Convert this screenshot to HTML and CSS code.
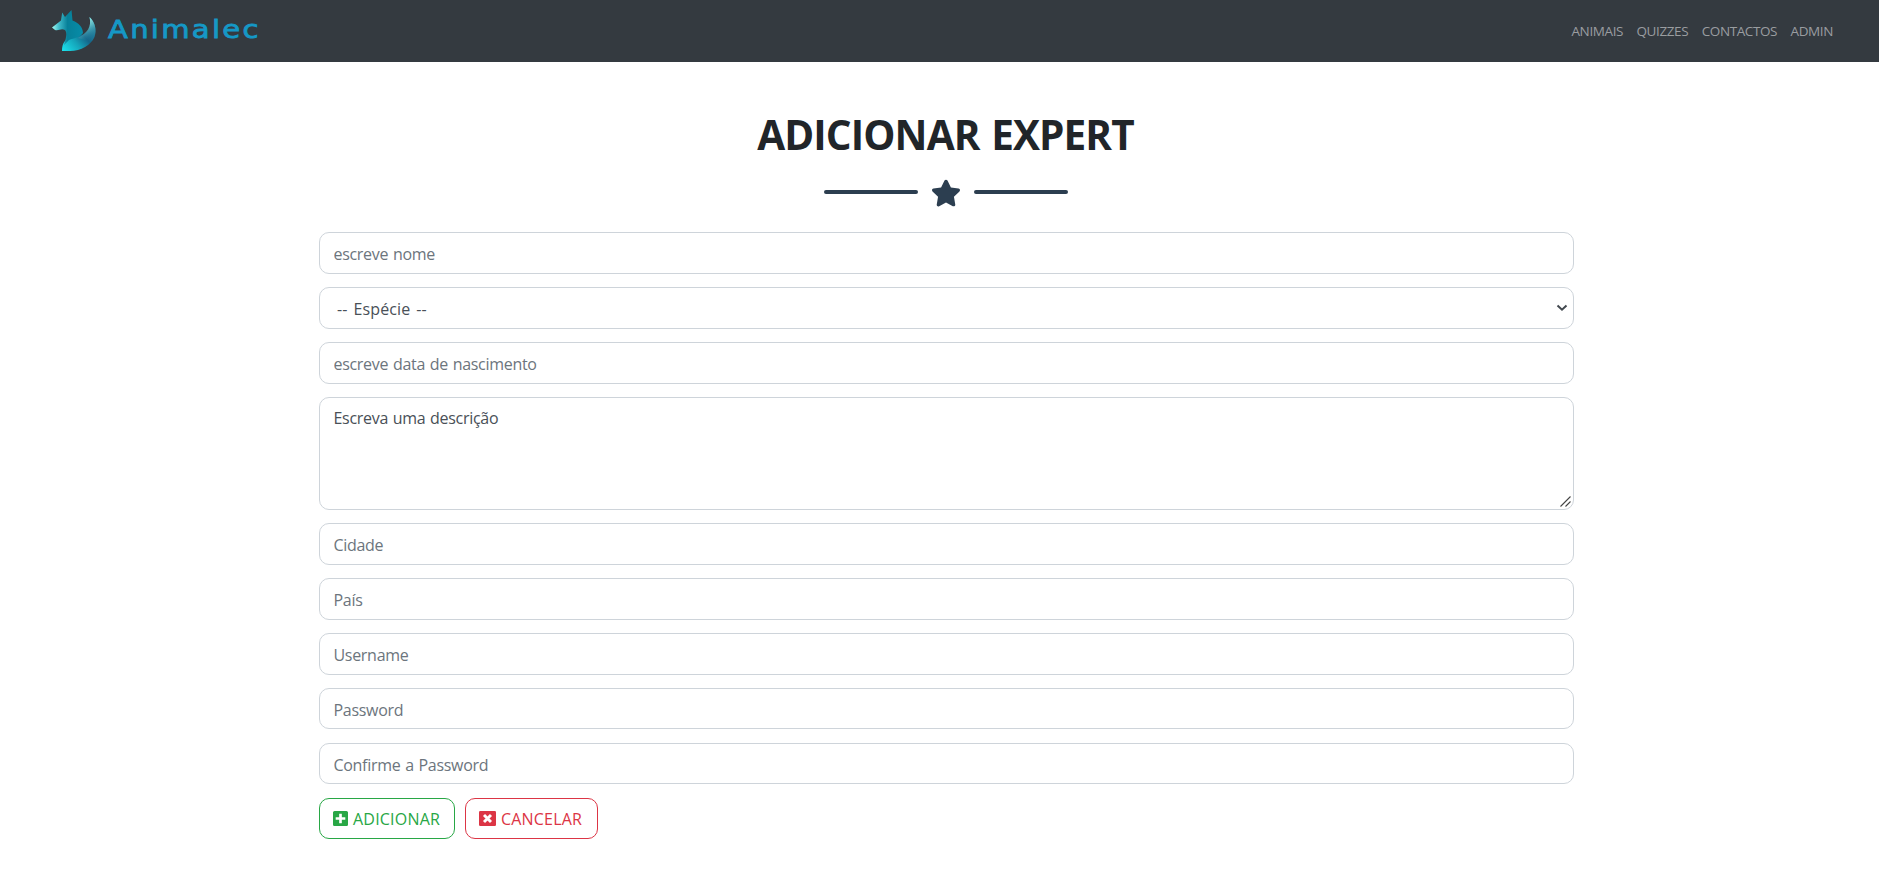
FILE: index.html
```html
<!DOCTYPE html>
<html lang="pt">
<head>
<meta charset="utf-8">
<title>Animalec</title>
<link rel="stylesheet" href="styles.css">
</head>
<body>
<header class="navbar">
  <a class="brand">
    <svg class="brand-logo" viewBox="0 0 46 42" width="46" height="42">
      <defs>
        <linearGradient id="head" x1="0" y1=".5" x2="1" y2=".5"><stop offset="0" stop-color="#a4fbf3"/><stop offset=".22" stop-color="#42bccb"/><stop offset=".5" stop-color="#078099"/><stop offset="1" stop-color="#078ca8"/></linearGradient>
        <linearGradient id="body" x1="0" y1="1" x2=".9" y2=".2"><stop offset="0" stop-color="#1ce4ee"/><stop offset=".4" stop-color="#14a2b8"/><stop offset=".65" stop-color="#14668a"/><stop offset="1" stop-color="#268ba5"/></linearGradient>
        <linearGradient id="tail" x1=".3" y1="0" x2=".7" y2="1"><stop offset="0" stop-color="#b5fff5"/><stop offset=".45" stop-color="#58b5c1"/><stop offset="1" stop-color="#15668a" stop-opacity="0"/></linearGradient>
      </defs>
      <path fill="url(#body)" d="M11 41C11 33 14 29 21 27 31 26 37 23 39 17 40 13 39 10 38.500 7 44 12 46 20 43.500 27 40 35 30 41 19 41Z"/>
      <path fill="url(#tail)" d="M38.500 7C44 12 46 20 43.500 27L37 31 27 28C36 23 41 17 38.500 7Z"/>
      <path fill="url(#head)" d="M1 17.500 10 10.500 11.200 2.500 14 7 20.500 0 21.500 10.500C28 13 31.500 17 32 23 30 27 23 28 18 30L13 35C15 28 16.500 23 14 20 10 18 8 21 4 20Z"/>
    </svg>
    <span class="brand-name">Animalec</span>
  </a>
  <nav class="nav-links">
    <a>ANIMAIS</a><a>QUIZZES</a><a>CONTACTOS</a><a>ADMIN</a>
  </nav>
</header>
<main class="content">
  <h1 class="title">ADICIONAR EXPERT</h1>
  <div class="divider">
    <span class="divider-line"></span>
    <svg class="star" viewBox="20 0 536 512" width="28" height="28"><path fill="#2c3e50" d="M259.300 17.800 194 150.200 47.900 171.500c-26.200 3.800-36.700 36.100-17.700 54.600l105.700 103-25 145.500c-4.500 26.300 23.200 46 46.400 33.700L288 439.600l130.700 68.700c23.200 12.200 50.900-7.400 46.400-33.700l-25-145.500 105.700-103c19-18.500 8.500-50.800-17.700-54.600L382 150.200 316.700 17.800c-11.700-23.600-45.600-23.900-57.400 0z"/></svg>
    <span class="divider-line"></span>
  </div>
  <form class="form">
    <input class="field" placeholder="escreve nome">
    <div class="control">
      <select class="field select"><option>-- Espécie --</option></select>
      <svg class="chevron" viewBox="0 0 12 8" width="12" height="8"><path d="M1.500 1.500 6 5.700 10.500 1.500" fill="none" stroke="#42484e" stroke-width="2"/></svg>
    </div>
    <input class="field" placeholder="escreve data de nascimento">
    <div class="control">
      <textarea class="field area">Escreva uma descrição</textarea>
      <svg class="grip" viewBox="0 0 11 11" width="11" height="11"><path d="M.5 10.500 10.500.5M5.500 10.500 10.500 5.500" stroke="#444" stroke-width="1.100"/></svg>
    </div>
    <input class="field" placeholder="Cidade">
    <input class="field" placeholder="País">
    <input class="field" placeholder="Username">
    <input class="field" type="password" placeholder="Password">
    <input class="field" type="password" placeholder="Confirme a Password">
    <div class="actions">
      <button type="button" class="btn add"><svg viewBox="0 32 448 448" width="15" height="15"><path fill="currentColor" d="M400 32H48C21.500 32 0 53.500 0 80v352c0 26.500 21.500 48 48 48h352c26.500 0 48-21.500 48-48V80c0-26.500-21.500-48-48-48zm-32 252c0 6.600-5.400 12-12 12h-92v92c0 6.600-5.400 12-12 12h-56c-6.600 0-12-5.400-12-12v-92H92c-6.600 0-12-5.400-12-12v-56c0-6.600 5.400-12 12-12h92v-92c0-6.600 5.400-12 12-12h56c6.600 0 12 5.400 12 12v92h92c6.600 0 12 5.400 12 12z"/></svg><span>ADICIONAR</span></button>
      <button type="button" class="btn cancel"><svg viewBox="0 0 17 15" width="17" height="15"><rect width="17" height="15" rx="1.200" fill="currentColor"/><path d="M5 4 12 11M12 4 5 11" stroke="#fff" stroke-width="2.900"/></svg><span>CANCELAR</span></button>
    </div>
  </form>
</main>
</body>
</html>
```
FILE: styles.css
```css
* { box-sizing: border-box; }
body { margin: 0; background: #fff; color: #212529; font-family: "Open Sans", "Noto Sans", sans-serif; }
.navbar { height: 62px; background: #343a40; display: flex; align-items: center; justify-content: space-between; padding: 0 46px 0 51px; }
.brand { display: flex; align-items: center; gap: 11px; }
.brand-name { font: 400 24px/36px "DejaVu Sans", sans-serif; color: #1598c6; letter-spacing: 1.900px; margin-top: -2px; transform: scaleX(1.210); transform-origin: left; -webkit-text-stroke: 0.800px #1598c6; }
.nav-links { display: flex; gap: 13.500px; font-size: 13.500px; line-height: 20px; color: #9a9da0; letter-spacing: -0.400px; }
.content { width: 1255px; margin: 0 auto 0 319px; padding-top: 43px; }
.title { margin: 0; font-size: 40.500px; line-height: 60px; font-weight: 700; text-align: center; letter-spacing: -0.900px; word-spacing: 2px; padding-right: 2px; }
.divider { display: flex; align-items: center; justify-content: center; gap: 14px; height: 28px; margin: 14px 1px 25px 0; }
.divider-line { width: 94px; height: 4px; border-radius: 4px; background: #2c3e50; margin-top: -2px; }
.form { display: flex; flex-direction: column; gap: 13.400px; }
.control { position: relative; }
.field { display: block; width: 100%; height: 41.600px; margin: 0; padding: 8px 14px 6px 13.500px; border: 1px solid #ced4da; border-radius: 10px; background: #fff; color: #495057; font: 16px/24px "Open Sans", sans-serif; letter-spacing: -0.300px; word-spacing: 0.900px; outline: 0; }
.field::placeholder { color: #6c757d; opacity: 1; }
.select { appearance: none; padding-left: 17px; letter-spacing: 0.150px; word-spacing: 1.500px; }
.chevron { position: absolute; right: 6.500px; top: 17.500px; }
.area { height: 112.600px; resize: none; }
.grip { position: absolute; right: 3px; bottom: 3px; }
.actions { display: flex; gap: 10px; }
.btn { height: 41.600px; display: flex; align-items: center; gap: 5px; padding: 0 13px; border: 1px solid; border-radius: 10px; background: #fff; font: 16px/24px "Open Sans", sans-serif; letter-spacing: 0.200px; }
.add { color: #28a745; width: 136px; }
.cancel { color: #dc3545; width: 133px; }
```
